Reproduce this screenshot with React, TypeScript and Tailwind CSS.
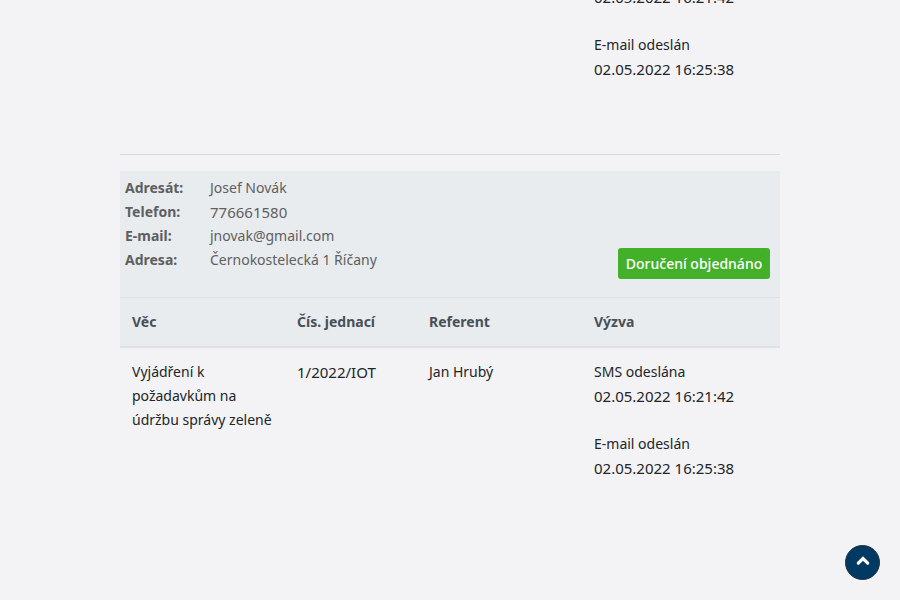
import React from "react";

interface Contact {
  label: string;
  value: string;
}

interface Notice {
  title: string;
  time: string;
}

const contacts: Contact[] = [
  { label: "Adresát:", value: "Josef Novák" },
  { label: "Telefon:", value: "776661580" },
  { label: "E-mail:", value: "jnovak@gmail.com" },
  { label: "Adresa:", value: "Černokostelecká 1 Říčany" },
];

const notices: Notice[] = [
  { title: "SMS odeslána", time: "02.05.2022 16:21:42" },
  { title: "E-mail odeslán", time: "02.05.2022 16:25:38" },
];

export default function App() {
  return (
    <div className="min-h-screen overflow-hidden bg-[#f3f3f5] font-['Noto_Sans',sans-serif] text-sm leading-6 text-[#212529]">
      <main className="mx-auto w-full max-w-[660px]">
        <PreviousRecord />
        <hr className="mb-4 border-t border-[#d9dadc]" />
        <RecipientPanel />
        <RecordTable />
      </main>
      <ScrollTopButton />
    </div>
  );
}

// Tail of the record above, scrolled partly out of view
function PreviousRecord() {
  return (
    <div className="-mt-[15px] grid grid-cols-[70%_30%] pb-[73px]">
      <div className="col-start-2 px-3">
        <p className="text-[15px] leading-6">{notices[0].time}</p>
        <p className="mt-6">{notices[1].title}</p>
        <p className="text-[15px] leading-6">{notices[1].time}</p>
      </div>
    </div>
  );
}

function RecipientPanel() {
  return (
    <section className="flex items-end justify-between bg-[#e8ecef] pr-2.5 pb-[18px] pl-[5px]">
      <dl className="pt-[5px] pb-[7px] text-[#5f5f5f]">
        {contacts.map(({ label, value }) => (
          <div key={label} className="flex">
            <dt className="w-[85px] font-bold">{label}</dt>
            <dd className={label === "Telefon:" ? "text-[15px] leading-6" : ""}>{value}</dd>
          </div>
        ))}
      </dl>
      <button
        type="button"
        className="h-[31px] w-[152px] rounded-[3px] bg-[#43b02a] text-center font-medium whitespace-nowrap text-white"
      >
        Doručení objednáno
      </button>
    </section>
  );
}

function RecordTable() {
  return (
    <table className="w-full table-fixed border-separate border-spacing-0 text-left">
      <thead className="bg-[#e8ecef] text-[#495057]">
        <tr>
          <th className="w-1/4 border-t border-b-2 border-[#dee2e6] p-3">Věc</th>
          <th className="w-1/5 border-t border-b-2 border-[#dee2e6] p-3">Čís. jednací</th>
          <th className="w-1/4 border-t border-b-2 border-[#dee2e6] p-3">Referent</th>
          <th className="w-[30%] border-t border-b-2 border-[#dee2e6] p-3">Výzva</th>
        </tr>
      </thead>
      <tbody>
        <tr className="align-top">
          <td className="p-3">Vyjádření k požadavkům na údržbu správy zeleně</td>
          <td className="p-3 text-[15px] leading-6">1/2022/IOT</td>
          <td className="p-3">Jan Hrubý</td>
          <td className="space-y-6 p-3">
            {notices.map(({ title, time }) => (
              <div key={title}>
                <p>{title}</p>
                <p className="text-[15px] leading-6">{time}</p>
              </div>
            ))}
          </td>
        </tr>
      </tbody>
    </table>
  );
}

function ScrollTopButton() {
  return (
    <button
      type="button"
      aria-label="Nahoru"
      className="fixed right-5 bottom-5 flex size-[35px] items-center justify-center rounded-full border border-[#212f3a] bg-[#003a62] text-white"
    >
      <svg viewBox="0 0 14 14" className="mb-1 size-3.5" fill="none" stroke="currentColor" strokeWidth="3.2" strokeLinecap="round">
        <path d="M2.3 9.2 7 4.6l4.7 4.6" />
      </svg>
    </button>
  );
}
